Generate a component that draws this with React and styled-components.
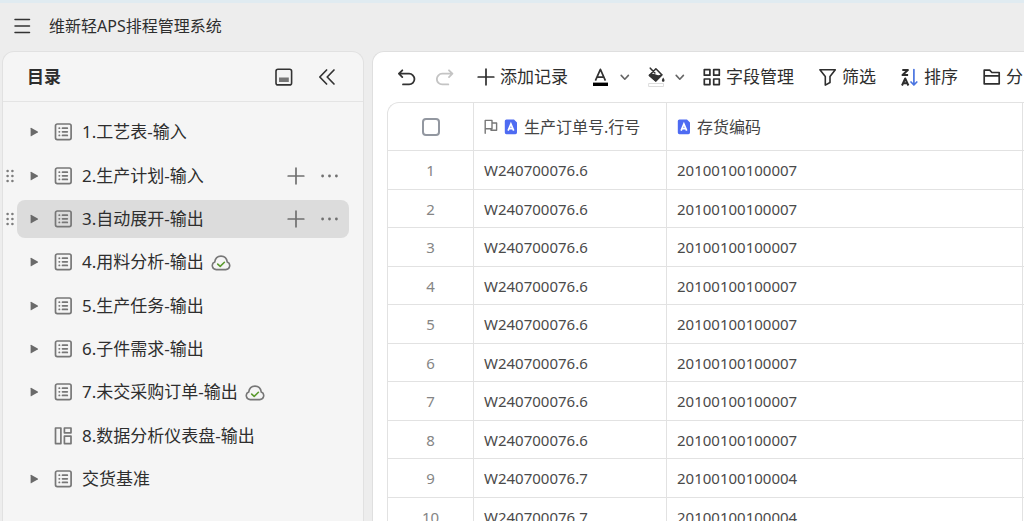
import React from "react";
import styled, { createGlobalStyle, css } from "styled-components";

const GlobalStyle = createGlobalStyle`
  *, *::before, *::after { box-sizing: border-box; }
  body {
    margin: 0;
    background: #ededed;
    color: #2e2e2e;
    font-family: "Noto Sans", "Noto Sans CJK SC", sans-serif;
    font-size: 17px;
    line-height: 24px;
  }
  svg { display: block; flex: none; }
`;

const Page = styled.div`
  display: flex;
  flex-direction: column;
  height: 100vh;
  overflow: hidden;
  border-top: 3px solid #e0ebf1;
`;

const TopBar = styled.header`
  flex: none;
  display: flex;
  align-items: center;
  gap: 18px;
  height: 48px;
  padding: 0 0 2px 13px;
`;

const AppTitle = styled.h1`
  margin: 0;
  font-size: 16px;
  font-weight: 400;
`;

const IconButton = styled.button`
  display: flex;
  align-items: center;
  justify-content: center;
  padding: 0;
  border: 0;
  background: none;
  color: ${(p) => p.$color || "#333"};
`;

const Workspace = styled.div`
  flex: 1;
  min-height: 0;
  display: flex;
  gap: 8px;
  padding-left: 2px;
`;

const Sidebar = styled.aside`
  flex: none;
  width: 362px;
  overflow: hidden;
  background: #f5f5f5;
  border: 1px solid #e1e1e1;
  border-bottom: 0;
  border-radius: 12px 12px 0 0;
`;

const SidebarHeader = styled.div`
  display: flex;
  align-items: center;
  gap: 25px;
  height: 50px;
  padding: 0 27px 0 24px;
  border-bottom: 1px solid #e4e4e4;
`;

const SidebarTitle = styled.h2`
  flex: 1;
  margin: 0;
  font-size: 17px;
  font-weight: 700;
`;

const TreeList = styled.ul`
  margin: 0;
  padding: 11px 14px 0 0;
  list-style: none;
`;

const TreeItem = styled.li`
  display: flex;
  margin-bottom: 5px;
  &:nth-child(3n + 1) { margin-bottom: 6px; }
`;

const DragHandle = styled.span`
  width: 14px;
  display: flex;
  align-items: center;
  padding-left: 3px;
  color: #7d7d7d;
`;

const TreeRow = styled.div`
  flex: 1;
  display: flex;
  align-items: center;
  height: 38px;
  padding: 0 9px 0 12px;
  border-radius: 8px;
  background: ${(p) => (p.$active ? "#dcdcdc" : "transparent")};
`;

const Expander = styled(IconButton)`
  width: 10px;
  height: 18px;
  margin-right: 15px;
`;

const TreeLink = styled.a`
  flex: 1;
  display: flex;
  align-items: center;
  gap: ${(p) => (p.$synced ? 8 : 10)}px;
  color: inherit;
  text-decoration: none;
  white-space: nowrap;
  svg { color: #777; }
`;

const ItemName = styled.span`
  display: flex;
  align-items: center;
  gap: 7px;
`;

const RowActions = styled.div`
  display: flex;
  gap: 15px;
`;

const Main = styled.main`
  flex: 1;
  min-width: 0;
  display: flex;
  flex-direction: column;
  overflow: hidden;
  background: #fff;
  border: 1px solid #dfdfdf;
  border-width: 1px 0 0 1px;
  border-radius: 12px 0 0 0;
`;

const Toolbar = styled.div`
  flex: none;
  display: flex;
  align-items: center;
  gap: 18px;
  height: 50px;
  padding-left: 25px;
  overflow: hidden;
`;

const History = styled.div`
  display: flex;
  gap: 20px;
  padding-right: 5px;
`;

const Split = styled.div`
  display: flex;
  align-items: center;
  gap: 9px;
`;

const ToolButton = styled.button`
  flex: none;
  display: flex;
  align-items: center;
  gap: 5px;
  padding: 0 7px 0 0;
  border: 0;
  background: none;
  color: #2e2e2e;
  font: inherit;
  white-space: nowrap;
`;

const TableFrame = styled.div`
  flex: 1;
  min-height: 0;
  margin-left: 14px;
  overflow: hidden;
  border: 1px solid #e2e2e2;
  border-width: 1px 0 0 1px;
  border-radius: 12px 0 0 0;
`;

const Table = styled.table`
  width: 100%;
  table-layout: fixed;
  border-collapse: separate;
  border-spacing: 0;
`;

const Col = styled.col`
  width: ${(p) => (p.$width ? `${p.$width}px` : "auto")};
`;

const cell = css`
  padding: 0 0 0 10px;
  border-bottom: 1px solid #e2e2e2;
  border-right: 1px solid #e2e2e2;
  text-align: left;
  white-space: nowrap;
  overflow: hidden;
  &:first-child { padding: 0; text-align: center; }
  &:last-child { padding: 0; border-right: 0; }
`;

const HeadCell = styled.th`
  ${cell}
  height: 48px;
  font-size: 16px;
  font-weight: 400;
  color: #444;
`;

const HeadLabel = styled.div`
  display: flex;
  align-items: center;
  gap: 6px;
`;

const BodyRow = styled.tr`
  height: 38px;
  &:nth-child(odd) { height: 39px; }
`;

const BodyCell = styled.td`
  ${cell}
  font-size: 15px;
  color: #4a4a4a;
  &:first-child { color: #858585; }
`;

const Checkbox = styled.input`
  appearance: none;
  display: block;
  width: 18px;
  height: 18px;
  margin: 0 auto;
  border: 2px solid #9297a0;
  border-radius: 4px;
  background: #fff;
`;

const Svg = ({ w = 18, h = 18, sw = 2, children }) => (
  <svg width={w} height={h} viewBox={`0 0 ${w} ${h}`} fill="none" stroke="currentColor"
    strokeWidth={sw} strokeLinecap="round" strokeLinejoin="round" aria-hidden="true">
    {children}
  </svg>
);

const MenuIcon = () => (
  <Svg sw={1.5}><path d="M2 2.5h14.5M2 9h14.5M2 15.5h14.5" /></Svg>
);
const DockIcon = () => (
  <Svg sw={1.6}>
    <rect x="1" y="1.3" width="15.6" height="15.6" rx="2" />
    <rect x="4" y="9.5" width="9.8" height="4.5" fill="#777" stroke="none" />
  </Svg>
);
const CollapseIcon = () => (
  <Svg sw={1.7}><path d="M8.6 2 1.8 9l6.8 7M16 2 9.2 9l6.8 7" /></Svg>
);
const GripIcon = () => (
  <svg width="8" height="14" viewBox="0 0 8 14" fill="currentColor" aria-hidden="true">
    {[2, 7, 12].map((y) => (
      <g key={y}><circle cx="1.6" cy={y} r="1.3" /><circle cx="6.4" cy={y} r="1.3" /></g>
    ))}
  </svg>
);
const TriangleIcon = () => (
  <svg width="10" height="10" viewBox="0 0 10 10" fill="currentColor" aria-hidden="true">
    <path d="M1.6 1.3Q1.6.4 2.5.9L8.7 4.4Q9.5 5 8.7 5.6L2.5 9.1Q1.6 9.6 1.6 8.7z" />
  </svg>
);
const SheetIcon = () => (
  <Svg sw={1.7}>
    <rect x="1.5" y="1" width="15.6" height="15.6" rx="1.8" />
    <path d="M8.5 5.2h4.8M8.5 8.8h4.8M8.5 12.4h4.8M5.2 5.2h.3M5.2 8.8h.3M5.2 12.4h.3" />
  </Svg>
);
const DashboardIcon = () => (
  <Svg sw={1.7}>
    <rect x="1.5" y="1" width="5.4" height="15.6" />
    <rect x="10.4" y="1" width="6.6" height="4.8" />
    <rect x="10.4" y="9.2" width="6.6" height="7.4" />
  </Svg>
);
const CloudCheckIcon = () => (
  <Svg w={20} h={18} sw={1.6}>
    <path d="M5.2 16.6h9.6a3.9 3.9 0 0 0 1.5-7.5c-.5-3.6-2.9-6-6.3-6S4.2 5.500 3.700 9.100a3.900 3.900 0 0 0 1.500 7.500z" />
    <path d="m6.700 11.100 2.500 2.300 4.200-4.100" stroke="#5b9a2e" />
  </Svg>
);
const PlusIcon = () => (
  <Svg sw={1.7}><path d="M9 1.200v15.600M1.200 9h15.600" /></Svg>
);
const DotsIcon = () => (
  <svg width="20" height="18" viewBox="0 0 20 18" fill="currentColor" aria-hidden="true">
    <circle cx="2.600" cy="9" r="1.400" /><circle cx="9.500" cy="9" r="1.400" /><circle cx="16.400" cy="9" r="1.400" />
  </svg>
);
const UndoIcon = () => (
  <Svg sw={1.8}><path d="M4.300 2.300.9 5.700l3.400 3.400M1.200 5.700h9.900a5.300 5.300 0 0 1 0 10.700H5" /></Svg>
);
const RedoIcon = () => (
  <Svg sw={1.8}><path d="m13 2.300 3.400 3.400L13 9.100M16.100 5.700H6.200a5.300 5.300 0 0 0 0 10.700h6.100" /></Svg>
);
const TextColorIcon = () => (
  <Svg sw={1.7}>
    <path d="M2.400 12.600 7.400 1.400l5 11.200M4.200 9.200h6.400" strokeLinecap="butt" />
    <rect x="0" y="14.600" width="15" height="3.400" fill="#000" stroke="none" />
  </Svg>
);
const FillIcon = () => (
  <Svg w={18} h={20} sw={1.6}>
    <path d="M1.500 8.300 7.900 1.800l5.900 5.900-6 6zM2.300 1.200l4.600 4.800" />
    <path d="M1.500 8.300q3-1.600 6 0t6.200-.4l-6 6z" fill="currentColor" />
    <path d="M15.200 10.600c1.900 2.600 1.600 4.200 0 4.200s-1.900-1.600 0-4.200z" fill="currentColor" stroke="none" />
    <rect x="1" y="16.500" width="14.500" height="3" strokeWidth="1" stroke="#ddd" fill="#fff" />
  </Svg>
);
const ChevronIcon = () => (
  <Svg w={10} h={10} sw={1.6}><path d="m1.200 3.400 3.600 3.800 3.600-3.800" /></Svg>
);
const GridIcon = () => (
  <Svg sw={1.7}>
    <rect x="1.300" y="1.600" width="5.600" height="5.600" /><rect x="10.700" y="1.600" width="5.600" height="5.600" />
    <rect x="1.300" y="11" width="5.600" height="5.600" /><rect x="10.700" y="11" width="5.600" height="5.600" />
  </Svg>
);
const FilterIcon = () => (
  <Svg sw={1.6}><path d="M.9 1.800h15.400L11 8.600v5.900l-4.700 2.600V8.600z" /></Svg>
);
const SortIcon = () => (
  <Svg sw={2}>
    <path d="M1.300 2h5.600L1.500 7h5.600M1 17.500l3.200-7 3.200 7M2.300 15.300h3.900" strokeLinecap="butt" />
    <path d="M12.900 1.500v15M10 14l2.900 3 2.900-3" stroke="#4a74e0" strokeWidth="1.700" />
  </Svg>
);
const FolderIcon = () => (
  <Svg sw={1.7}><path d="M1.200 15.800V2.200h5.500l2.200 2.300h7.300v11.300zM1.200 7.900h15" /></Svg>
);
const FlagIcon = () => (
  <Svg w={14} h={16} sw={1.4}>
    <path d="M1.200 14.200V1.400h6.800v8.400H1.200M8 4h4.600v7.200H7v-1.200" stroke="#777" />
  </Svg>
);
const TextFieldIcon = () => (
  <svg width="14" height="16" viewBox="0 0 14 16" aria-hidden="true">
    <path d="M2.400.4H10l3 3v10.200a1.600 1.600 0 0 1-1.600 1.600h-9A1.600 1.600 0 0 1 .8 13.600V2A1.600 1.600 0 0 1 2.400.4z" fill="#4e6bf2" />
    <path d="m4.100 11.600 2.800-6.600 2.800 6.600M5.100 9.600h3.600" fill="none" stroke="#fff" strokeWidth="1.700" />
  </svg>
);

const items = [
  { name: "1.工艺表-输入" },
  { name: "2.生产计划-输入", hover: true },
  { name: "3.自动展开-输出", hover: true, active: true },
  { name: "4.用料分析-输出", synced: true },
  { name: "5.生产任务-输出" },
  { name: "6.子件需求-输出" },
  { name: "7.未交采购订单-输出", synced: true },
  { name: "8.数据分析仪表盘-输出", dashboard: true },
  { name: "交货基准" },
];

const rows = Array.from({ length: 10 }, (_, i) => ({
  id: i + 1,
  order: i < 8 ? "W240700076.6" : "W240700076.7",
  code: i < 8 ? "20100100100007" : "20100100100004",
}));

export default function App() {
  return (
    <>
      <GlobalStyle />
      <Page>
        <TopBar>
          <IconButton aria-label="菜单"><MenuIcon /></IconButton>
          <AppTitle>维新轻APS排程管理系统</AppTitle>
        </TopBar>
        <Workspace>
          <Sidebar>
            <SidebarHeader>
              <SidebarTitle>目录</SidebarTitle>
              <IconButton aria-label="停靠"><DockIcon /></IconButton>
              <IconButton aria-label="收起"><CollapseIcon /></IconButton>
            </SidebarHeader>
            <TreeList>
              {items.map((item) => (
                <TreeItem key={item.name}>
                  <DragHandle>{item.hover && <GripIcon />}</DragHandle>
                  <TreeRow $active={item.active}>
                    {item.dashboard ? (
                      <Expander as="span" />
                    ) : (
                      <Expander $color="#6a6a6a" aria-label="展开"><TriangleIcon /></Expander>
                    )}
                    <TreeLink href="#">
                      {item.dashboard ? <DashboardIcon /> : <SheetIcon />}
                      <ItemName>
                        {item.name}
                        {item.synced && <CloudCheckIcon />}
                      </ItemName>
                    </TreeLink>
                    {item.hover && (
                      <RowActions>
                        <IconButton $color="#6f6f6f" aria-label="添加"><PlusIcon /></IconButton>
                        <IconButton $color="#6f6f6f" aria-label="更多"><DotsIcon /></IconButton>
                      </RowActions>
                    )}
                  </TreeRow>
                </TreeItem>
              ))}
            </TreeList>
          </Sidebar>
          <Main>
            <Toolbar>
              <History>
                <IconButton aria-label="撤销"><UndoIcon /></IconButton>
                <IconButton $color="#c4c4c4" aria-label="重做"><RedoIcon /></IconButton>
              </History>
              <ToolButton><PlusIcon />添加记录</ToolButton>
              <Split>
                <IconButton aria-label="文字颜色"><TextColorIcon /></IconButton>
                <IconButton $color="#666" aria-label="选择文字颜色"><ChevronIcon /></IconButton>
              </Split>
              <Split>
                <IconButton aria-label="填充颜色"><FillIcon /></IconButton>
                <IconButton $color="#666" aria-label="选择填充颜色"><ChevronIcon /></IconButton>
              </Split>
              <ToolButton><GridIcon />字段管理</ToolButton>
              <ToolButton><FilterIcon />筛选</ToolButton>
              <ToolButton><SortIcon />排序</ToolButton>
              <ToolButton><FolderIcon />分</ToolButton>
            </Toolbar>
            <TableFrame>
              <Table>
                <colgroup>
                  <Col $width={86} />
                  <Col $width={193} />
                  <Col />
                  <Col $width={1} />
                </colgroup>
                <thead>
                  <tr>
                    <HeadCell><Checkbox type="checkbox" aria-label="全选" /></HeadCell>
                    <HeadCell>
                      <HeadLabel><FlagIcon /><TextFieldIcon />生产订单号.行号</HeadLabel>
                    </HeadCell>
                    <HeadCell>
                      <HeadLabel><TextFieldIcon />存货编码</HeadLabel>
                    </HeadCell>
                    <HeadCell as="td" />
                  </tr>
                </thead>
                <tbody>
                  {rows.map((row) => (
                    <BodyRow key={row.id}>
                      <BodyCell>{row.id}</BodyCell>
                      <BodyCell>{row.order}</BodyCell>
                      <BodyCell>{row.code}</BodyCell>
                      <BodyCell />
                    </BodyRow>
                  ))}
                </tbody>
              </Table>
            </TableFrame>
          </Main>
        </Workspace>
      </Page>
    </>
  );
}
